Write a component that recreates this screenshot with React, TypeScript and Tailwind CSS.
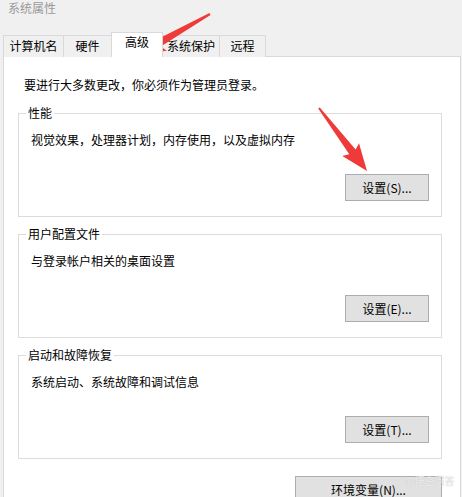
import type { ReactNode } from "react";

const tabs = [
  { label: "计算机名", width: "w-[61px]" },
  { label: "硬件", width: "w-[49px]" },
  { label: "高级", width: "w-[52px]", active: true },
  { label: "系统保护", width: "w-[58px]" },
  { label: "远程", width: "w-[47px]" },
];

const groups = [
  { title: "性能", detail: "视觉效果，处理器计划，内存使用，以及虚拟内存", button: "设置(S)..." },
  { title: "用户配置文件", detail: "与登录帐户相关的桌面设置", button: "设置(E)..." },
  { title: "启动和故障恢复", detail: "系统启动、系统故障和调试信息", button: "设置(T)..." },
];

function WinButton({ children, className = "" }: { children: ReactNode; className?: string }) {
  return (
    <button
      className={`h-[27px] border border-[#adadad] bg-[#e1e1e1] text-[12px] leading-none text-black ${className}`}
    >
      {children}
    </button>
  );
}

// tapered red arrow, like the ones drawn on top of the screenshot
function arrowPoints(x1: number, y1: number, x2: number, y2: number) {
  const dx = x2 - x1;
  const dy = y2 - y1;
  const len = Math.hypot(dx, dy);
  const ux = dx / len;
  const uy = dy / len;
  const nx = -uy;
  const ny = ux;
  const head = 24;
  const bx = x2 - ux * head;
  const by = y2 - uy * head;
  const p = (x: number, y: number) => `${x.toFixed(1)},${y.toFixed(1)}`;
  return [
    p(x1 + nx * 1, y1 + ny * 1),
    p(bx + nx * 4, by + ny * 4),
    p(bx - ux * 3 + nx * 10.5, by - uy * 3 + ny * 10.5),
    p(x2, y2),
    p(bx - ux * 3 - nx * 10.5, by - uy * 3 - ny * 10.5),
    p(bx - nx * 4, by - ny * 4),
    p(x1 - nx * 1, y1 - ny * 1),
  ].join(" ");
}

export default function App() {
  return (
    <div
      className="relative h-[497px] w-[462px] overflow-hidden bg-[#f0f0f0] text-black"
      style={{ fontFamily: '"Noto Sans CJK SC", "Microsoft YaHei", sans-serif' }}
    >
      {/* title */}
      <div className="h-[32px] bg-[#f0f0f0] pl-[8px] text-[12px] leading-[16px] text-[#9a9a9a]">
        系统属性
      </div>

      {/* tabs */}
      <div className="flex h-[25px] items-end pl-[3px]">
        {tabs.map((tab, i) =>
          tab.active ? (
            <div
              key={tab.label}
              className={`relative z-10 -ml-px flex h-[25px] ${tab.width} justify-center border border-b-0 border-[#d9d9d9] bg-white pt-[1px] text-[12px] leading-[16px]`}
            >
              {tab.label}
            </div>
          ) : (
            <div
              key={tab.label}
              className={`${i > 0 ? "-ml-px" : ""} flex h-[22px] ${tab.width} justify-center border border-b-0 border-[#d9d9d9] bg-[#f0f0f0] pt-[2px] text-[12px] leading-[16px]`}
            >
              {tab.label}
            </div>
          )
        )}
      </div>

      {/* tab panel */}
      <div className="-mt-px ml-[3px] mr-[1px] h-[460px] border border-[#d9d9d9] bg-white pl-[14px] pr-[18px] pt-[20px]">
        <p className="pl-[6px] text-[12px] leading-[16px]">要进行大多数更改，你必须作为管理员登录。</p>

        {groups.map((g, i) => (
          <fieldset
            key={g.title}
            className={`${i === 0 ? "mt-[12px]" : "mt-[9px]"} flex flex-col border border-[#dcdcdc] pb-[15px]`}
          >
            <legend className="ml-[7px] px-[2px] text-[12px] leading-[16px]">{g.title}</legend>
            <p className="pl-[12px] pt-[11px] text-[12px] leading-[16px]">{g.detail}</p>
            <WinButton className="mr-[12px] mt-[26px] w-[84px] self-end">{g.button}</WinButton>
          </fieldset>
        ))}

        <div className="mt-[17px] flex justify-end">
          <WinButton className="w-[147px]">环境变量(N)...</WinButton>
        </div>
      </div>

      {/* watermark */}
      <div className="absolute left-[405px] top-[474px] whitespace-nowrap text-[10px] leading-[13px] text-white/75 [text-shadow:0_0_1px_#b5b5b5]">
        @悟空问答
      </div>

      {/* annotation arrows */}
      <svg className="pointer-events-none absolute inset-0" width={462} height={497}>
        <polygon points={arrowPoints(210, 14, 138, 55)} fill="#ef3a3a" />
        <polygon points={arrowPoints(319, 108, 367, 171)} fill="#ef3a3a" />
      </svg>
    </div>
  );
}
